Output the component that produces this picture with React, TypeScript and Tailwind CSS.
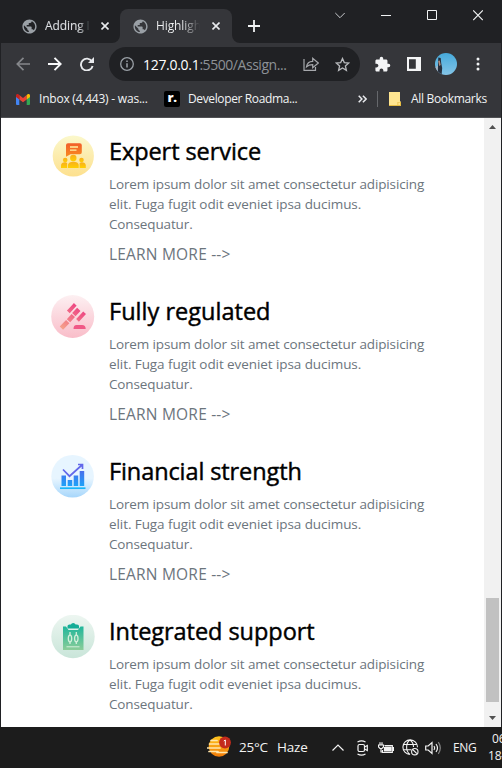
import type { ReactNode } from "react";
import { MdExtension, MdPublic } from "react-icons/md";

const ui = "font-['Open_Sans','Noto_Sans',sans-serif]";

function Globe() {
  return <MdPublic className="-mx-[1.5px] h-[17px] w-[17px] shrink-0 text-[#9aa0a6]" />;
}

function TabClose() {
  return (
    <svg className="h-2 w-2 shrink-0" viewBox="0 0 8 8" stroke="#e8eaed" strokeWidth="1.6">
      <path d="M.5.5l7 7M7.5.5l-7 7" />
    </svg>
  );
}

function TabStrip() {
  return (
    <div className="flex h-[43px] bg-[#202124]">
      <div className="mt-[9px] flex h-[34px] w-[119px] items-center pl-[21px]">
        <Globe />
        <span className="ml-[9px] w-[45px] overflow-hidden bg-gradient-to-r from-[#dfe1e5] from-75% to-[#202124] bg-clip-text text-[12px] tracking-[-0.1px] whitespace-nowrap text-transparent [-webkit-text-stroke:0.15px_#dfe1e540]">Adding I</span>
        <span className="ml-[11px] flex"><TabClose /></span>
      </div>
      <div className="relative mt-[9px] flex h-[34px] w-[112px] items-center rounded-t-lg bg-[#35363a] pl-[13px]">
        <svg className="absolute bottom-0 -left-2 h-2 w-2" viewBox="0 0 8 8"><path d="M8 0v8H0a8 8 0 008-8" fill="#35363a" /></svg>
        <svg className="absolute -right-2 bottom-0 h-2 w-2" viewBox="0 0 8 8"><path d="M0 0v8h8a8 8 0 01-8-8" fill="#35363a" /></svg>
        <Globe />
        <span className="ml-[9px] w-[44px] overflow-hidden bg-gradient-to-r from-[#f1f3f4] from-60% to-[#35363a] bg-clip-text text-[12px] tracking-[-0.1px] whitespace-nowrap text-transparent">Highlight</span>
        <span className="ml-[12px] flex"><TabClose /></span>
      </div>
      <svg className="mt-[20px] ml-[16px] h-3 w-3" viewBox="0 0 12 12" stroke="#f1f3f4" strokeWidth="1.8"><path d="M6 0v12M0 6h12" /></svg>
      <div className="mt-[10px] ml-[75px] flex h-[11px] gap-9 text-[#f1f3f4]">
        <svg className="h-[11px] w-[10px]" viewBox="0 0 10 11" fill="none" stroke="#c8cacd"><path d="M.3 3L5 7.7 9.7 3" /></svg>
        <svg className="h-[11px] w-[10px]" viewBox="0 0 10 11" stroke="currentColor"><path d="M0 5.5h10" /></svg>
        <svg className="h-[11px] w-[10px]" viewBox="0 0 10 11" fill="none" stroke="currentColor"><path d="M.5.5h9v9h-9z" /></svg>
        <svg className="h-[11px] w-[10px]" viewBox="0 0 10 11" fill="none" stroke="currentColor" strokeWidth="1.1"><path d="M.2.4l9.6 9.6M9.8.4L.2 10" /></svg>
      </div>
    </div>
  );
}

function Toolbar() {
  return (
    <div className="flex h-[42px] items-center bg-[#35363a] pl-[15px]">
      <svg className="h-[14px] w-[14px]" viewBox="0 0 14 14" fill="none" stroke="#85878b" strokeWidth="1.7"><path d="M14 7H1.5M7.5.8L1.3 7l6.2 6.2" /></svg>
      <svg className="ml-[18px] h-[14px] w-[14px]" viewBox="0 0 14 14" fill="none" stroke="#f8f9fa" strokeWidth="1.9"><path d="M0 7h12.5M6.5.8L12.7 7l-6.2 6.2" /></svg>
      <svg className="ml-[18px] h-[14px] w-[14px]" viewBox="0 0 14 14"><path d="M11.8 4.3A5.9 5.9 0 1012.6 9" fill="none" stroke="#e8eaed" strokeWidth="1.9" /><path d="M14 0v6H8z" fill="#e8eaed" /></svg>
      <div className="ml-[15px] flex h-[34px] w-[251px] items-center rounded-full bg-[#202124] pl-[11px]">
        <svg className="h-[14px] w-[14px]" viewBox="0 0 14 14" fill="none" stroke="#9aa0a6" strokeWidth="1.3"><circle cx="7" cy="7" r="6.3" /><path d="M7 6.2v4.3M7 3.4v1.500" strokeWidth="1.5" /></svg>
        <span className="ml-[9px] w-[146px] text-[14px] tracking-[-0.19px] whitespace-nowrap text-[#8d9196]"><span className="tracking-[-0.3px] text-white">127.0.0.1</span><span className="tracking-[-0.45px]">:5500/Assign...</span></span>
        <svg className="ml-[14px] h-4 w-[16px]" viewBox="0 0 16 16" fill="none" stroke="#a6a8ac" strokeWidth="1.2"><path d="M1 3v11.300h11.500V11" /><path d="M3.500 10.800c.5-3.500 2.800-5.400 6.200-5.500V2.200L15.300 7l-5.600 4.700V8.600c-2.700 0-4.500.5-6.200 2.200z" /></svg>
        <svg className="ml-[16px] h-[15px] w-[15px]" viewBox="0 0 15 15" fill="none" stroke="#b8babd" strokeWidth="1.3"><path d="M7.500 1.500l1.800 4.100 4.500.4-3.400 2.900 1 4.400-3.900-2.300-3.900 2.300 1-4.400L1.200 6l4.500-.4z" /></svg>
      </div>
      <MdExtension className="ml-[14px] h-[17px] w-[17px] text-[#f4f5f6]" />
      <svg className="ml-[16px] h-[14px] w-[14px]" viewBox="0 0 14 14"><path fill="#f4f5f6" fillRule="evenodd" d="M0 0h14v14H0zM2 2.200h6.800v9.600H2z" /></svg>
      <svg className="ml-[14px] h-[22px] w-[22px] overflow-hidden rounded-full" viewBox="0 0 22 22">
        <defs><linearGradient id="sky" x2="0" y2="1"><stop stopColor="#46aadb" /><stop offset="1" stopColor="#83c4e7" /></linearGradient></defs>
        <path d="M0 0h22v22H0z" fill="url(#sky)" />
        <path d="M0 14l3-1 2 9H0z" fill="#a7b5c4" /><path d="M3.300 4.500l2.400.5.500 5 1 5-.6 7H2.800l.2-10z" fill="#26303e" /><path d="M3.200 8l1.600-.4.900 4.500-1.500 1z" fill="#b28d7e" />
      </svg>
      <svg className="ml-[19px] h-[14px] w-1" viewBox="0 0 4 14" fill="#f1f3f4"><circle cx="2" cy="2" r="1.5" /><circle cx="2" cy="7" r="1.5" /><circle cx="2" cy="12" r="1.5" /></svg>
    </div>
  );
}

function Bookmarks() {
  return (
    <div className="flex h-[33px] items-center border-b border-[#505154] bg-[#35363a] pb-[4px] pl-[15px] text-[12px] tracking-[-0.2px] text-[#f1f3f4]">
      <svg className="h-[11px] w-[14px]" viewBox="0 0 14 11">
        <path d="M0 2.200l3.300 2.500V11H1a1 1 0 01-1-1z" fill="#4285f4" /><path d="M10.700 4.700L14 2.200V10a1 1 0 01-1 1h-2.300z" fill="#34a853" /><path d="M3.300 1L7 3.900 10.700 1v4.400L7 8.200 3.300 5.400z" fill="#ea4335" /><path d="M0 2.300V1.600C0 .1 1.500-.4 2.600.5l.7.5v4.400L0 2.900z" fill="#c5221f" /><path d="M10.700 1l.7-.5C12.500-.4 14 .1 14 1.600v1.300l-3.300 2.500z" fill="#fbbc04" />
      </svg>
      <span className="ml-[9px] w-[109px] tracking-[-0.22px] whitespace-nowrap">Inbox (4,443) - was...</span>
      <span className="ml-[16px] flex h-4 w-4 items-center justify-center rounded-[2px] bg-black pb-[2px] text-[13px] font-extrabold tracking-[-0.5px] text-white">r.</span>
      <span className="ml-[8px] w-[110px] tracking-[-0.37px] whitespace-nowrap">Developer Roadma...</span>
      <svg className="ml-[60px] h-2 w-[9px]" viewBox="0 0 9 8" fill="none" stroke="#e8eaed" strokeWidth="1.5"><path d="M.7.7L3.900 4 .7 7.300M4.900.7L8.100 4 4.900 7.300" /></svg>
      <div className="ml-[10px] h-4 w-px bg-[#66686c]" />
      <svg className="ml-[11px] h-[14px] w-[12px]" viewBox="0 0 12 14"><path d="M0 0h11v9l1 1v4H0z" fill="#ffe590" /><path d="M0 13h8.500v-3H12v4H0z" fill="#e7bd43" /><path d="M9.300 10.500h1.700V13H9.300z" fill="#ffe590" /></svg>
      <span className="ml-[10px] tracking-[-0.32px] whitespace-nowrap">All Bookmarks</span>
    </div>
  );
}

const icons: Record<string, ReactNode> = {
  expert: (
    <svg className="h-[44px] w-[44px]" viewBox="0 0 44 44">
      <defs>
        <linearGradient id="ye" x2="0" y2="1"><stop stopColor="#fbf8cc" /><stop offset="1" stopColor="#fde08e" /></linearGradient>
        <linearGradient id="or" x2="0" y2="1"><stop stopColor="#f25f2a" /><stop offset="1" stopColor="#f98a20" /></linearGradient>
        <linearGradient id="am" x2="0" y2="1"><stop stopColor="#f8ae1e" /><stop offset="1" stopColor="#ffd000" /></linearGradient>
      </defs>
      <circle cx="22.300" cy="21" r="20.600" fill="url(#ye)" />
      <path d="M17 8.300h11.800q2 0 2 2v7q0 2-2 2H19.500l-4.500 2.500V10.300q0-2 2-2z" fill="url(#or)" />
      <path d="M19 12h8M19 15.200h6.500" stroke="#fff0a3" strokeWidth="1.300" />
      <g fill="url(#am)"><circle cx="22.300" cy="23" r="3.200" /><path d="M17 33v-3c0-4.500 10.700-4.500 10.700 0v3z" /><circle cx="14.200" cy="25" r="2.300" /><path d="M10 33v-2.500c0-3.500 5-4 6.200-2.200V33z" /><circle cx="30.500" cy="25" r="2.300" /><path d="M34.800 33v-2.500c0-3.500-5-4-6.200-2.200V33z" /></g>
    </svg>
  ),
  regulated: (
    <svg className="h-[44px] w-[44px]" viewBox="0 0 44 44">
      <defs>
        <linearGradient id="pk" x2="0" y2="1"><stop stopColor="#fdf0f2" /><stop offset="1" stopColor="#f9bdc9" /></linearGradient>
        <linearGradient id="mg" gradientUnits="userSpaceOnUse" x1="28" y1="14" x2="12" y2="34"><stop stopColor="#ee4a83" /><stop offset="1" stopColor="#f5a08b" /></linearGradient>
      </defs>
      <circle cx="21.700" cy="21.500" r="21.500" fill="url(#pk)" />
      <g fill="none" stroke="url(#mg)" strokeWidth="4.600">
        <path d="M18.600 15.500l4.400-4.700M27.800 24l4.500-4.800" strokeWidth="3.800" strokeLinecap="square" strokeLinejoin="round" />
        <path d="M22.800 19.700l5-5.300M22.300 20.500l-4.800 5.200M16.700 26.600l-6.300 6.600" />
      </g>
      <path d="M22.500 34q0-4 3-4H31q3.700 0 3.700 4z" fill="#f05886" />
    </svg>
  ),
  financial: (
    <svg className="h-[44px] w-[44px]" viewBox="0 0 44 44">
      <defs>
        <linearGradient id="bl" x2="0" y2="1"><stop offset=".55" stopColor="#e7f5ff" /><stop offset="1" stopColor="#a6d6fb" /></linearGradient>
        <linearGradient id="br" gradientUnits="userSpaceOnUse" y1="13" y2="33" x2="0"><stop stopColor="#5364e9" /><stop offset="1" stopColor="#16a9fa" /></linearGradient>
      </defs>
      <circle cx="21.600" cy="21.300" r="21.300" fill="url(#bl)" />
      <path d="M10.500 20.500H15V31h-4.500zM16.700 25h4.500v6h-4.500zM22.700 20.500h4.500V31h-4.500zM28.700 16h4.500v15h-4.500z" fill="url(#br)" />
      <path d="M9 33.200h25.500" stroke="#15b6fa" strokeWidth="1.700" />
      <path d="M12 14.500l6.500 6.700L31.500 9.500M27 9.500h4.500V14" fill="none" stroke="#6268ea" strokeWidth="1.700" />
    </svg>
  ),
  support: (
    <svg className="h-[44px] w-[44px]" viewBox="0 0 44 44">
      <defs>
        <linearGradient id="gn" x2="0" y2="1"><stop stopColor="#edf6f1" /><stop offset="1" stopColor="#c9e5d9" /></linearGradient>
        <linearGradient id="cl" x2="0" y2="1"><stop stopColor="#20b69b" /><stop offset="1" stopColor="#8ccd99" /></linearGradient>
      </defs>
      <circle cx="22" cy="21.500" r="21.700" fill="url(#gn)" />
      <path d="M12 11.500h3l2.500 3.500h9.500l2.500-3.500h3V35H12z" fill="url(#cl)" />
      <path d="M16.500 13.500V11q0-1.500 2-1.500h1.400q.5-1.500 2.300-1.500t2.400 1.500H26q2 0 2 1.500v2.500z" fill="#15ad97" />
      <path d="M15.500 31.800h13" stroke="#d4efdb" />
      <g fill="none" stroke="#d4efdb" strokeWidth="1.300"><ellipse cx="19" cy="23.500" rx="1.700" ry="3.300" /><ellipse cx="25.300" cy="23.500" rx="1.700" ry="3.300" /><path d="M19 17v3.200M25.300 17v3.200M19 26.800V29M25.300 26.800V29" /></g>
    </svg>
  ),
};

const features = [
  { icon: "expert", title: "Expert service", tracking: "tracking-[-0.08px]" },
  { icon: "regulated", title: "Fully regulated", tracking: "tracking-[0.02px]" },
  { icon: "financial", title: "Financial strength", tracking: "tracking-[-0.1px]" },
  { icon: "support", title: "Integrated support", tracking: "tracking-[-0.05px]" },
];

function Page() {
  return (
    <div className="flex h-[609px] overflow-hidden bg-white">
      <main className="w-[483px] pt-[17px] pl-[50px]">
        {features.map((f) => (
          <section key={f.icon} className="flex h-[160px] gap-[14px]">
            <div>{icons[f.icon]}</div>
            <div className="whitespace-nowrap text-[#6c757d]">
              <h2 className={"h-[39px] text-[23.5px] leading-[33px] font-medium text-black [-webkit-text-stroke:0.45px_black] " + f.tracking}>{f.title}</h2>
              <p className="text-[13.5px] leading-5 tracking-[-0.13px]">
                Lorem ipsum dolor sit amet consectetur adipisicing<br /><span className="tracking-[-0.08px]">elit. Fuga fugit odit eveniet ipsa ducimus.</span><br />Consequatur.
              </p>
              <a className="mt-[10px] block text-[15.5px] leading-5 tracking-[0.2px]">LEARN MORE --&gt;</a>
            </div>
          </section>
        ))}
      </main>
      <aside className="flex w-[17px] flex-col items-center bg-[#f1f1f1]">
        <svg className="mt-[7px] h-1 w-[7px]" viewBox="0 0 7 4"><path d="M0 4L3.500 0 7 4z" fill="#505050" /></svg>
        <div className="mt-[469px] h-[104px] w-[13px] bg-[#c1c1c1]" />
        <svg className="mt-[14px] h-1 w-[7px]" viewBox="0 0 7 4"><path d="M0 0l3.500 4L7 0z" fill="#505050" /></svg>
      </aside>
    </div>
  );
}

function Taskbar() {
  return (
    <footer className="flex h-[41px] items-center overflow-hidden bg-[#1c1c1c] pl-[207px] text-[13px] text-[#f3f3f3]">
      <svg className="mb-[3px] h-[21px] w-6 shrink-0" viewBox="0 0 24 21">
        <defs><linearGradient id="sun" x2="0" y2="1"><stop stopColor="#ffc51c" /><stop offset="1" stopColor="#f17a08" /></linearGradient></defs>
        <circle cx="12" cy="10.500" r="10.300" fill="url(#sun)" />
        <path d="M4 4.500h6M2.500 8h11M0 12h13M2 15.500h9M10 16.500h10" stroke="#ffe6ad" strokeWidth="1.700" strokeLinecap="round" />
        <circle cx="18" cy="6.500" r="5.900" fill="#c42b1c" />
        <path d="M16.800 5l1.500-1v5.500" stroke="#fff" fill="none" />
      </svg>
      <span className="ml-[8px] w-[30px] shrink-0 text-[13.5px] tracking-[-0.25px] whitespace-nowrap">25°C</span>
      <span className="ml-[8px] w-[31px] shrink-0 text-[13.5px] tracking-[-0.2px]">Haze</span>
      <svg className="ml-[24px] h-[7px] w-3 shrink-0" viewBox="0 0 12 7" fill="none" stroke="currentColor" strokeWidth="1.2"><path d="M.5 6.500L6 1l5.500 5.500" /></svg>
      <svg className="ml-[12px] h-4 w-3 shrink-0" viewBox="0 0 12 16" fill="none" stroke="currentColor" strokeWidth="1.2"><rect x="2" y="4.500" width="6.500" height="7" rx="1.500" /><path d="M8.500 7l2.800-1.500v5L8.500 9M1.500 2Q5.500-.2 9.500 2M1.500 14q4 2.200 8 0" /></svg>
      <svg className="ml-[10px] h-3 w-4 shrink-0" viewBox="0 0 16 12" fill="none" stroke="currentColor" strokeWidth="1.2"><path d="M6.500 3.500h7.800v7H4.500V8" /><path d="M7 5h6v4H6.500V5M14.500 5.500H16v3h-1.500" fill="currentColor" /><path d="M.5 3h5v2L4 6.500H2L.5 5zM2 .3V3M4 .3V3M3 6.500V10h1.500" /></svg>
      <svg className="ml-[8px] h-[17px] w-[17px] shrink-0" viewBox="0 0 17 17" fill="none" stroke="currentColor" strokeWidth="1.1"><path d="M8 15.500a7.300 7.300 0 117.500-7.200M8 15.500c-5-4-4-12 0-14.500 2.800 2 3.500 4.500 3.500 7M1.500 5.500h13M1.200 10.700h8" /><circle cx="12.800" cy="12.700" r="3.200" /><path d="M10.700 10.500l4.200 4.200" /></svg>
      <svg className="ml-[6px] h-[14px] w-[17px] shrink-0" viewBox="0 0 17 14" fill="none" stroke="currentColor" strokeWidth="1.2"><path d="M.7 5v4h2.500L7 12.500v-11L3.200 5zM9 5q1.500 2 0 4M11 3q3 4 0 8" /><path d="M13.300 1.200q4 5.800 0 11.600" stroke="#858585" /></svg>
      <span className="ml-[11px] w-6 shrink-0 text-[12px] tracking-[-0.3px]">ENG</span>
      <div className="ml-[11px] flex w-[14px] shrink-0 flex-col items-end self-start pt-[3px] text-[12px] leading-[17px] tracking-[-0.2px] whitespace-nowrap">
        <span className="w-[10px]">06:</span>
        <span className="w-[14px]">18-</span>
      </div>
    </footer>
  );
}

export default function App() {
  return (
    <div className={"h-[768px] w-[502px] overflow-hidden bg-[#202124] antialiased " + ui}>
      <div className="border-x border-[#202124]">
        <TabStrip />
        <Toolbar />
        <Bookmarks />
        <Page />
      </div>
      <Taskbar />
    </div>
  );
}
